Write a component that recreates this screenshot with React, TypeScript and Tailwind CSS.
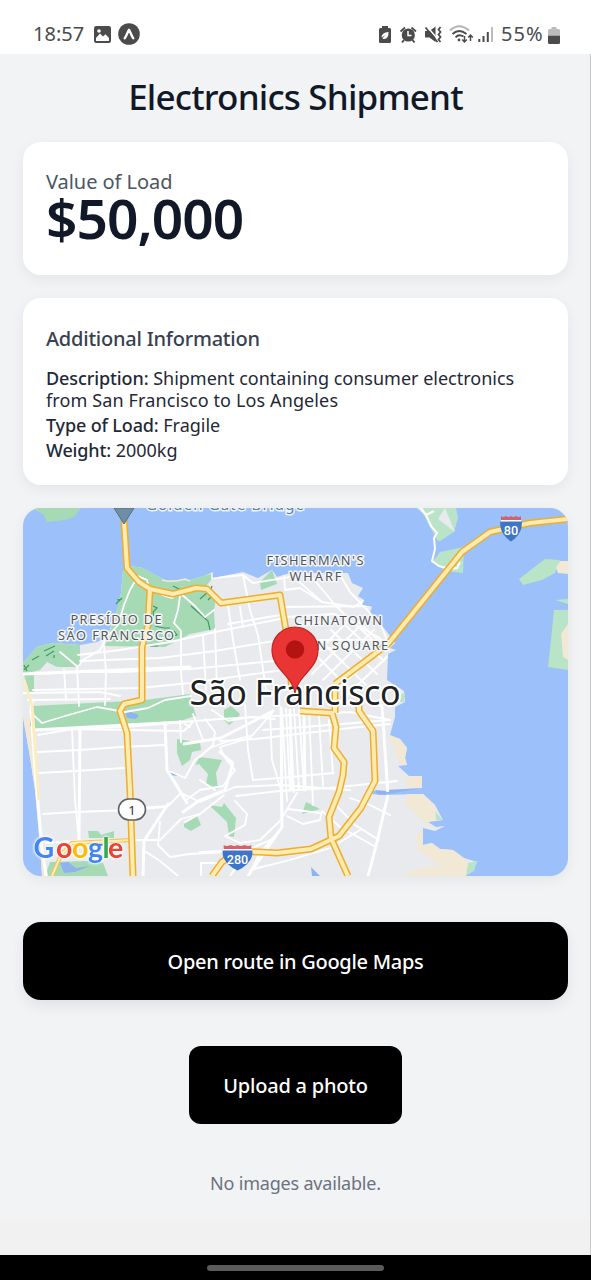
import type { ReactNode } from "react";

function StatusBar() {
  return (
    <header className="flex h-[54px] shrink-0 items-center bg-white pl-[33px] pr-[31px] pt-[14px] text-[#4b4b4b]">
      <span className="w-[51px] text-[20px] leading-none">18:57</span>
      <svg className="ml-[10px] mt-px h-[17px] w-[17px]" viewBox="0 0 17 17">
        <rect width="17" height="17" rx="2.2" fill="#4b4b4b" />
        <path d="M2 15V12L6 7.5L9 10.5L11.5 8.2L15 12V15Z" fill="#fff" />
        <circle cx="5" cy="5" r="1.8" fill="#fff" />
      </svg>
      <svg className="ml-[7px] h-[22px] w-[22px]" viewBox="0 0 22 22">
        <circle cx="11" cy="11" r="10.8" fill="#4b4b4b" />
        <path d="M6.7 15.3C8.6 13 9.6 8.5 11 6.8C12.4 8.5 13.4 13 15.3 15.3" fill="none" stroke="#fff" strokeWidth="2.3" strokeLinecap="round" strokeLinejoin="round" />
      </svg>
      <div className="ml-auto flex items-center">
        <svg className="h-[24px] w-[120px]" viewBox="377 22 120 24">
          <g fill="#4b4b4b">
            <path d="M382 26h6v2h1.500q1.500 0 1.500 1.500v12q0 1.500-1.500 1.500h-9q-1.500 0-1.500-1.500v-12q0-1.500 1.500-1.500h1.500z" />
            <path d="M381.500 37.500q0-5 7-5.500q.3 7-4.500 7q-1.500 0-1.500-.7l2.800-3.300l-2.800 2z" fill="#fff" />
            <circle cx="408.300" cy="35" r="6.600" />
            <path d="M400.500 31.500L405 27.500M416 31.500L411.500 27.500" stroke="#4b4b4b" strokeWidth="1.700" />
            <path d="M404 40l-2 2.500M412.500 40l2 2.500" stroke="#4b4b4b" strokeWidth="2" />
            <path d="M408 31v4.500h3.500" stroke="#fff" strokeWidth="1.500" fill="none" />
            <path d="M425 31h4.500l6-4.500v15.500l-6-4.500h-4.500z" />
            <path d="M426.500 26L439 40.500" stroke="#fff" strokeWidth="1.500" />
            <path d="M425.500 27.500L437.500 42" stroke="#4b4b4b" strokeWidth="1.800" />
            <path d="M440.500 27l-2 2.500l2 2.500l-2 2.500l2 2.500l-2 2.500l2 2.500" stroke="#4b4b4b" strokeWidth="1.800" fill="none" />
          </g>
          <path d="M450 30.500Q459 22 469 30.500" stroke="#b4b4b4" strokeWidth="2" fill="none" />
          <path d="M452.500 34Q459 28 466.500 34M455.500 37.300Q459 33.500 463.500 36.500" stroke="#4b4b4b" strokeWidth="1.900" fill="none" />
          <circle cx="459" cy="40" r="1.400" fill="#4b4b4b" />
          <path d="M464.500 36v5.500m-2.300-2l2.300 2.500l2.300-2.500M470.500 41v-5.500m-2.300 2l2.300-2.500l2.300 2.500" stroke="#4b4b4b" strokeWidth="1.500" fill="none" />
          <g strokeWidth="2" stroke="#4b4b4b">
            <path d="M479.300 42v-3M483.500 42v-6M487.800 42v-10" />
            <path d="M492 42v-15" stroke="#bdbdbd" />
          </g>
        </svg>
        <span className="ml-[4px] w-[44px] text-[20px] leading-none tracking-[1.100px]">55%</span>
        <svg className="ml-[3px] mt-[2px] h-[17px] w-[12px]" viewBox="0 0 12 17">
          <path d="M3.500 0h5v2h2q1.500 0 1.500 1.500v5.500h-12v-5.500q0-1.500 1.500-1.500h2z" fill="#bcbcbc" />
          <path d="M0 8.700h12v6.800q0 1.500-1.500 1.500h-9q-1.500 0-1.500-1.500z" fill="#4b4b4b" />
        </svg>
      </div>
    </header>
  );
}

function Card({ children, className = "" }: { children: ReactNode; className?: string }) {
  return (
    <section className={`w-full rounded-[18px] bg-white px-[23px] shadow-[0_4px_14px_rgba(0,0,0,0.06)] ${className}`}>
      {children}
    </section>
  );
}

const land =
  "M130 566L143 568L155 575L167 581L190 580L204 576L213 572L213 578L243 572L258 578L272 570L277 577L290 573L348 573L352 583L363 588L358 596L364 600L362 605L372 607L370 612L380 623L387 632L395 643L390 648L396 650L388 654L387 680L404 691L405 702L395 707L395 717L390 735L400 739L407 748L405 758L407 765L398 766L409 776L422 776L422 788L387 792L366 790L366 793L380 795L423 794L435 805L443 820L428 822L436 827L445 826L435 831L423 828L423 845L432 843L440 849L453 850L464 858L477 862L473 871L465 876H42L40 847L35 790L30 757L23 717V663L37 647L53 643L80 645L97 642L107 637L117 610L121 593L123 570Z";

const greens = [
  "M31 508H81L74 517L65 520L47 522L43 514Z",
  "M130 566L143 568L155 575L167 581L190 580L204 576L211 574L211 580L203 590L216 597L214 612L215 629L190 634L165 647L105 646L117 610L121 593L123 570Z",
  "M260 582L272 570L277 584L261 590Z",
  "M37 647L53 643L80 645V667H57L47 662L40 670L23 674V663Z",
  "M24 674H34V692H28Z",
  "M31 706L110 702L145 700L190 694L194 715L175 724L145 724L110 727L32 731Z",
  "M177 739L190 741L191 744L200 742L201 750L192 752L190 760L182 766L177 753Z",
  "M200 757L222 760L216 773L218 789L206 784L208 774L199 764L195 765Z",
  "M224 710L231 706L240 714L238 718L229 725L224 720Z",
  "M209 805L222 807L224 803L236 818L234 837L229 836L227 822Z",
  "M184 824L197 816L201 825L191 831L184 827Z",
  "M306 802L320 809L302 814Z",
  "M88 831L98 831L101 835L114 831V838L89 838Z",
  "M50 862L90 861L103 863L108 876H45Z",
  "M162 702L190 696L196 716L176 722Z",
  "M420 508H456L458 518L454 532L440 541L437 540Z",
  "M440 552L464 547L463 573L445 571L433 561Z",
  "M519 579L545 559L560 560L555 573L542 580L523 585Z",
  "M554 610H568V670L548 667L551 640Z",
  "M555 600L568 599V604Z",
  "M435 811L443 820H435Z",
  "M468 863L477 861L474 871L466 875Z",
  "M398 695L405 693L404 702L400 702Z",
];

const sands = [
  "M389 735L400 739L407 748L405 758L407 765H400Z",
  "M407 776H422V788L405 787Z",
  "M407 794L423 794L435 805L436 820L428 822L433 828L424 822L405 804Z",
  "M423 828V845L432 843L440 849L453 850L468 861L466 876H405L410 871L440 865L418 850L416 836Z",
  "M568 561L560 561L556 568L558 573L568 574Z",
  "M568 624L561 634L563 657L568 660Z",
  "M23 717L30 757L35 790L40 847L42 876H48L43 847L39 800L36 760L31 720Z",
];

const minorRoads = [
  "M23 674L34 674L80 672L120 672L190 669L285 660",
  "M78 655L120 650L170 642L215 632L285 618",
  "M80 661L160 658L215 651L285 639",
  "M60 652L78 667L83 660L100 650L106 638L118 625L124 605L130 590L138 576L147 580L149 590",
  "M33 690L140 688L190 683L290 669",
  "M104 646L106 672L105 705M77 668L79 706M64 670L66 700",
  "M180 596L178 610L174 623L181 631L181 672L183 694",
  "M213 578L243 575L253 583L290 577M243 575L250 610L258 635L266 690",
  "M150 589L165 596L172 598L180 593L195 606L205 617L214 610",
  "M228 605L233 640L240 680M215 629L217 690M203 635L206 690",
  "M228 624L286 614M240 607L243 627",
  "M284 576L285 590L300 588L322 602L354 607L364 600",
  "M296 579L322 602M311 576L336 606L350 620L372 639M340 575L350 592L380 623L387 640",
  "M282 607L375 606M286 617L335 614L380 638",
  "M300 640L387 640M304 650L350 647M285 629L330 620M288 655L330 648",
  "M323 680L374 630M334 692L385 645M312 674L361 625M303 667L352 617M344 698L389 655",
  "M320 640L366 685M331 630L377 674M342 622L384 661M352 616L389 650M310 649L352 692",
  "M23 693L100 692L120 696M28 700L110 699",
  "M30 712L42 723L65 716L97 707L125 712L148 708L165 700L191 696",
  "M34 730L78 728L125 727L183 722L220 719L350 712L390 720",
  "M38 735L73 729L184 731L193 722M72 729L75 800L79 842M37 752L80 750L120 747L165 745M39 773L75 771L124 768M43 814L75 812L131 810L164 807M46 843L75 841L132 840L160 840",
  "M140 808L168 806L181 793L200 802L235 787L280 785M167 769L186 800L200 790L223 786L235 770L225 758L220 747L250 738L273 712",
  "M165 723L167 770L185 778L195 760L210 748L226 742L253 735",
  "M193 714L203 740M180 721L181 742M205 719L215 732L213 745L200 757M212 710L228 721L250 717L275 719",
  "M245 705L248 750L253 780L280 778L333 773",
  "M220 741L255 739L350 728L390 724M263 730L330 725L390 720",
  "M270 712L272 760L281 790L282 827L260 853L248 876M282 710L287 801M290 711L294 792M299 710L304 789M309 709L313 805M319 715L323 786M329 720L333 774",
  "M286 709L290 790M294 709L299 790",
  "M236 796L280 791L330 788L397 781M280 785L350 790",
  "M235 801L247 814L245 825L225 836L240 843L260 840L280 821L297 793M224 795L200 814L185 822",
  "M287 816L303 824L320 820L322 811L340 827L376 847M288 809L320 813",
  "M334 803L355 825L379 840M350 798L370 805L390 815",
  "M160 822L158 845L170 857L190 854L223 852M143 850L160 861L178 876M160 840L181 819L200 814",
  "M200 852L223 851M201 863H223M201 863V876M230 876L248 850L270 840M250 870L290 860L330 848L360 830",
  "M200 780L215 790M185 724L190 727",
];

const majorRoads = [
  "M23 674L190 667",
  "M34 730L183 722",
  "M80 728L79 842",
  "M168 804L144 841L143 876",
  "M165 723L167 770L187 803",
  "M184 744L221 738L273 711",
  "M220 752L233 763L225 790L200 800L183 812",
  "M281 708L282 827L248 876",
  "M304 710L305 790M290 710L292 790",
  "M378 705L382 706L388 795L375 850L368 876",
  "M33 700L31 707L35 770L42 847L46 876",
];

const highways = [
  "M124 520L127 568L139 582L150 589L173 594L196 588L207 589L221 603L280 595L286 630L292 690",
  "M150 589L148 625L142 647L142 700L124 704L120 711L127 733L130 790L133 876",
  "M335 684L388 644L462 552L490 532L530 523L568 519",
  "M300 711L332 713L336 727L334 748L344 762L343 775L339 792L329 817L331 838L348 876",
  "M359 700L359 711L373 731L375 781L361 808L339 836L311 849L277 853L238 851L222 862L212 876",
  "M335 713V691",
];

function Label({ x, y, children, width }: { x: number; y: number; children: string; width: number }) {
  return (
    <text x={x} y={y} textLength={width} fontSize="12.8" textAnchor="middle" fill="#55575b" stroke="#f4f6f8" strokeWidth="3" strokeLinejoin="round" paintOrder="stroke">
      {children}
    </text>
  );
}

function Shield({ x, y, children }: { x: number; y: number; children: string }) {
  const wide = children.length > 2;
  return (
    <g transform={`translate(${x} ${y})`}>
      <g transform={wide ? "scale(1.38 1)" : undefined}>
        <path d="M-10.500 -8Q-12 0-7 7Q-4 11 0 13.500Q4 11 7 7Q12 0 10.500-8Z" fill="#3d75c9" />
        <path d="M-10 -8V-12Q-8-10-5-12Q-2-10 0-12Q2-10 5-12Q8-10 10-12V-8Z" fill="#d96068" />
        <path d="M-10.500 -7.200H10.500" stroke="#fff" strokeWidth="1.500" />
      </g>
      <text y="6.500" textAnchor="middle" textLength={wide ? 21.500 : 14.500} lengthAdjust="spacingAndGlyphs" fontFamily="Roboto, sans-serif" fontWeight="500" fontSize="13.500" fill="#fff">
        {children}
      </text>
    </g>
  );
}

function CityMap() {
  return (
    <div className="h-[368px] w-full overflow-hidden rounded-[18px] bg-[#9cc0f9] shadow-[0_4px_14px_rgba(0,0,0,0.06)]">
      <svg className="block h-full w-full" viewBox="23 508 545 368">
        <defs>
          <clipPath id="shore">
            <path d={land} />
          </clipPath>
        </defs>
        <path d={land} fill="#e8eaed" />
        {greens.map((d) => (
          <path key={d} d={d} fill={Number(d.slice(1, 4)) > 390 ? "#b9e4c7" : "#a6dab5"} />
        ))}
        {sands.map((d) => (
          <path key={d} d={d} fill="#f1e8d5" />
        ))}
        <path d="M445 508L455 532L438 519ZM417 508H422L426 516Z" fill="#e8eaed" />
        <path d="M125 710L139 715L136 719L127 718ZM168 769L178 776L170 775ZM375 790L386 791V795L377 794ZM311 867L320 876H312ZM60 863L68 862L76 868L90 866L75 872L64 873ZM386 790L422 788L387 794Z" fill="#8db4ef" />
        <path d="M162 580Q172 583 185 579L190 581" stroke="#f1e8d5" strokeWidth="1.500" fill="none" />
        <g fill="none" stroke="#3f9a63" strokeWidth="1.200">
          <path d="M24 670l5-5M32 660l7-4M46 656l8-5M44 651l11-5M116 604l6-6M117 600l5-1M153 606l4 2-4 4 1 4M155 626l9 2 6 0M150 646h8M173 586l8 4M191 606l17 15 2 9M171 637l6-2-3-4M32 706l-1 20" />
          <path d="M54 655v3M206 590l8 4-6 6M208 592l-8 7M212 586l-3 9 6 4M24 665l3 6" />
        </g>
        <g fill="none" stroke="#fff" strokeLinejoin="round" strokeLinecap="round" clipPath="url(#shore)">
          {minorRoads.map((d) => (
            <path key={d} d={d} strokeWidth="1.800" />
          ))}
          {majorRoads.map((d) => (
            <path key={d} d={d} strokeWidth="2.900" />
          ))}
        </g>
        <path d="M421 508L426 515L434 511M426 515L431 526L437 533L434 538L435 549L432 561L439 566L450 569L457 568L460 562" stroke="#fff" strokeWidth="2" fill="none" />
        <path d="M24 680L32 705L39 800" stroke="#fdecc0" strokeWidth="3" fill="none" />
        <path d="M52 876L61 855L72 843L132 840" stroke="#f5bd4e" strokeWidth="4" fill="none" />
        <path d="M52 876L61 855L72 843L132 840" stroke="#feebb0" strokeWidth="2.200" fill="none" />
        <g fill="none" strokeLinejoin="round">
          {highways.map((d) => (
            <path key={d} d={d} stroke="#efad2d" strokeWidth="7" />
          ))}
          {highways.map((d) => (
            <path key={d} d={d} stroke="#feebb0" strokeWidth="4" />
          ))}
        </g>
        <path d="M114 508H134L124 524Z" fill="#6f8da3" stroke="#536f86" />
        <text x="225" y="509.500" textLength="158" fontSize="15" textAnchor="middle" fill="#577fb5" stroke="#eff5ff" strokeWidth="3" paintOrder="stroke">
          Golden Gate Bridge
        </text>
        <Label x={315} y={565} width={97}>FISHERMAN'S</Label>
        <Label x={315.500} y={581} width={52}>WHARF</Label>
        <Label x={338} y={625} width={88}>CHINATOWN</Label>
        <Label x={333} y={650} width={110}>UNION SQUARE</Label>
        <Label x={116} y={624} width={91}>PRESÍDIO DE</Label>
        <Label x={116} y={640} width={116}>SÃO FRANCISCO</Label>
        <text x="295" y="705" textLength="211" fontSize="34" textAnchor="middle" fill="#202124" stroke="#fff" strokeWidth="4" strokeLinejoin="round" paintOrder="stroke">
          São Francisco
        </text>
        <path d="M295 693C292 675 272 669 272 650A23 23 0 0 1 318 650C318 669 298 675 295 693Z" fill="#ea3535" stroke="#c5221f" strokeWidth="1.200" />
        <circle cx="295" cy="649.500" r="9.200" fill="#b31412" />
        <Shield x={511} y={528}>80</Shield>
        <Shield x={237.500} y={857}>280</Shield>
        <rect x="118.500" y="799" width="27" height="21" rx="10.500" fill="#fff" stroke="#5f6368" strokeWidth="1.600" />
        <text x="132" y="814.500" textAnchor="middle" fontSize="13" fill="#333">1</text>
        <text y="857.500" fontFamily="Lato, sans-serif" fontSize="28.500" fontWeight="700" className="[filter:drop-shadow(0_0_1px_#fff)_drop-shadow(0_0_1.5px_#fff)]">
          <tspan x="33.500" fill="#4285f4">G</tspan>
          <tspan x="56" fill="#ea4335">o</tspan>
          <tspan x="72" fill="#fbbc04">o</tspan>
          <tspan x="88" fill="#4285f4">g</tspan>
          <tspan x="102.500" fill="#34a853">l</tspan>
          <tspan x="108" fill="#ea4335">e</tspan>
        </text>
      </svg>
    </div>
  );
}

export default function App() {
  return (
    <div className="flex h-[1280px] w-[591px] flex-col overflow-hidden bg-[#f2f3f5] font-['Noto_Sans',sans-serif]">
      <StatusBar />
      <main className="flex flex-1 flex-col items-center border-r border-[#c8c9cb] pl-[23px] pr-[22px]">
        <h1 className="mt-[20px] whitespace-nowrap text-[35px] font-medium leading-[46px] tracking-[-0.800px] text-[#111827]">
          Electronics Shipment
        </h1>
        <Card className="mt-[22px] h-[133px] pt-[27px]">
          <p className="text-[20px] leading-[26px] tracking-[-0.050px] text-[#4b5563]">Value of Load</p>
          <p className="text-[55px] font-semibold leading-[46px] tracking-[-1px] text-[#111827]">$50,000</p>
        </Card>
        <Card className="mt-[23px] h-[187px] pt-[27px]">
          <h2 className="text-[20px] font-medium leading-[27px] tracking-[-0.230px] text-[#374151]">Additional Information</h2>
          <div className="mt-[15px] whitespace-nowrap text-[18px] leading-[22px] text-[#1f2937]">
            <p>
              <b className="font-medium tracking-[-0.100px]">Description:</b> Shipment containing consumer electronics
              <br />
              <span className="tracking-[0.120px]">from San Francisco to Los Angeles</span>
            </p>
            <p className="mt-[3px]">
              <b className="font-medium tracking-[-0.150px]">Type of Load:</b> Fragile
            </p>
            <p className="mt-[3px]">
              <b className="font-medium tracking-[-0.150px]">Weight:</b> 2000kg
            </p>
          </div>
        </Card>
        <div className="mt-[23px] w-full">
          <CityMap />
        </div>
        <button className="mt-[46px] h-[78px] w-full rounded-[18px] bg-black pt-px text-[20px] font-medium tracking-[-0.280px] text-white shadow-[0_6px_14px_rgba(0,0,20,0.07)]">
          Open route in Google Maps
        </button>
        <button className="mt-[46px] h-[78px] w-[213px] rounded-[12px] bg-black pt-[2px] text-[20px] font-medium tracking-[-0.220px] text-white">
          Upload a photo
        </button>
        <p className="mt-[46px] text-[18px] leading-[26px] tracking-[-0.200px] text-[#6b7280]">No images available.</p>
      </main>
      <div className="h-[35px] shrink-0 border-r border-[#c8c9cb] bg-[#f1f1f1]" />
      <footer className="flex h-[25px] shrink-0 items-center justify-center bg-black">
        <div className="h-[6px] w-[177px] rounded-full bg-[#5b5b5b]" />
      </footer>
    </div>
  );
}
